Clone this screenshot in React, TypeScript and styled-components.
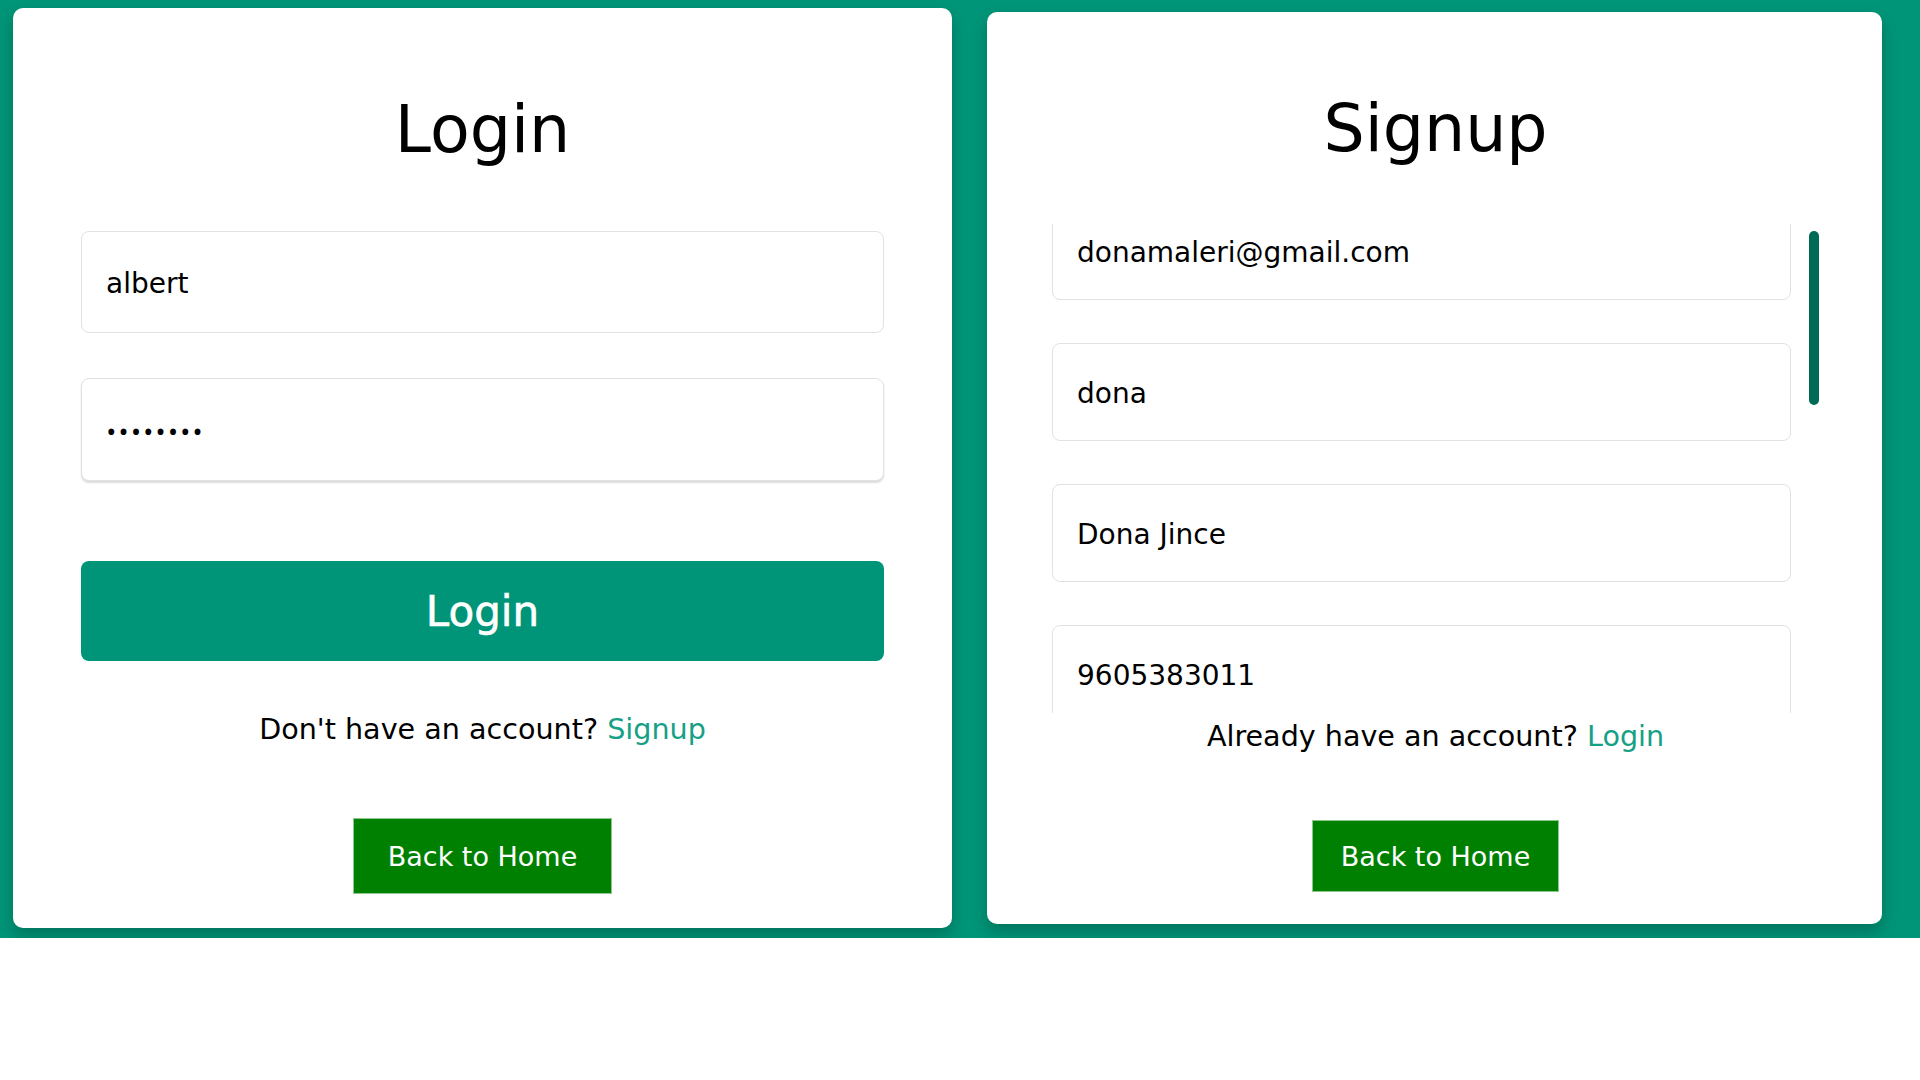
import React, { useLayoutEffect, useRef } from "react";
import styled, { createGlobalStyle } from "styled-components";

const GlobalStyle = createGlobalStyle`
  html, body {
    margin: 0;
    padding: 0;
    background: #ffffff;
  }
  body {
    font-family: "DejaVu Sans", "Open Sans", sans-serif;
    color: #000;
  }
  * { box-sizing: border-box; }
`;

const Page = styled.div`
  display: flex;
  align-items: center;
  gap: 35px;
  padding: 8px 0 10px 13px;
  background: #009578;
  width: 100%;
`;

const Card = styled.section<{ $width: number; $pad: string }>`
  width: ${(p) => p.$width}px;
  flex: none;
  display: flex;
  flex-direction: column;
  align-items: center;
  background: #ffffff;
  border-radius: 10px;
  padding: ${(p) => p.$pad};
  box-shadow: 0 8px 16px rgba(0, 0, 0, 0.22);
`;

const Title = styled.h1<{ $top: number }>`
  margin: ${(p) => p.$top}px 0 0;
  font-size: 65px;
  line-height: 80px;
  font-weight: 400;
  color: #000;
`;

const Field = styled.input<{ $h: number; $raised?: boolean; $mask?: boolean }>`
  display: block;
  width: 100%;
  height: ${(p) => p.$h}px;
  flex: none;
  margin: 0;
  padding: 2px 24px 0;
  border: 1px solid #e2e2e2;
  border-radius: 8px;
  background: #fff;
  font-family: ${(p) => (p.$mask ? `"Open Sans", sans-serif` : "inherit")};
  font-size: 28px;
  letter-spacing: ${(p) => (p.$mask ? "1.8px" : "0")};
  color: #000;
  outline: none;
  box-shadow: ${(p) => (p.$raised ? "0 2px 2px rgba(0,0,0,0.14)" : "none")};
`;

const LoginForm = styled.div`
  width: 100%;
  margin-top: 61px;
  display: flex;
  flex-direction: column;
  gap: 45px;
`;

const PrimaryButton = styled.button<{ $top: number }>`
  width: 100%;
  height: 100px;
  flex: none;
  margin-top: ${(p) => p.$top}px;
  border: none;
  border-radius: 8px;
  background: #009578;
  color: #fff;
  font-family: inherit;
  font-size: 42px;
  font-weight: 400;
  -webkit-text-stroke: 0.6px #fff;
  cursor: pointer;
`;

const Prompt = styled.p<{ $top: number }>`
  margin: ${(p) => p.$top}px 0 0;
  font-size: 28.6px;
  line-height: 40px;
  color: #000;
  text-align: center;
`;

const Link = styled.a`
  color: #16a085;
  text-decoration: none;
  cursor: pointer;
`;

const HomeButton = styled.button<{ $top: number; $w: number; $h: number }>`
  margin-top: ${(p) => p.$top}px;
  width: ${(p) => p.$w}px;
  height: ${(p) => p.$h}px;
  padding: 0;
  background: #008000;
  border: 1px solid #8cc78c;
  color: #fff;
  font-family: inherit;
  font-size: 27px;
  font-weight: 400;
  cursor: pointer;
`;

const ScrollFrame = styled.div`
  align-self: stretch;
  display: flex;
  height: 489px;
  margin-top: 55px;
`;

const ScrollArea = styled.div`
  flex: 1;
  min-width: 0;
  padding-right: 18px;
  overflow-y: scroll;
  display: flex;
  flex-direction: column;
  gap: 43px;
  scrollbar-width: none;

  &::-webkit-scrollbar {
    display: none;
  }
`;

const ScrollTrack = styled.div`
  width: 10px;
  flex: none;
  padding-top: 7px;
`;

const ScrollThumb = styled.div`
  width: 10px;
  height: 174px;
  border-radius: 5px;
  background: #006b55;
`;

const signupFields = [
  { type: "email", value: "donamaleri@gmail.com", placeholder: "Email" },
  { type: "text", value: "dona", placeholder: "Username" },
  { type: "text", value: "Dona Jince", placeholder: "Full Name" },
  { type: "tel", value: "9605383011", placeholder: "Phone Number" },
  { type: "text", value: "", placeholder: "Address" },
  { type: "text", value: "", placeholder: "City" },
  { type: "text", value: "", placeholder: "State" },
  { type: "text", value: "", placeholder: "Pincode" },
  { type: "password", value: "", placeholder: "Password" },
  { type: "password", value: "", placeholder: "Confirm Password" },
];

export default function App() {
  const scrollRef = useRef<HTMLDivElement>(null);

  useLayoutEffect(() => {
    if (scrollRef.current) scrollRef.current.scrollTop = 22;
  }, []);

  return (
    <>
      <GlobalStyle />
      <Page>
        <Card $width={939} $pad="0 68px 34px">
          <Title $top={82}>Login</Title>
          <LoginForm>
            <Field $h={102} type="text" value="albert" readOnly placeholder="Username" />
            <Field
              $h={103}
              $raised
              $mask
              type="password"
              value="albert12"
              readOnly
              placeholder="Password"
            />
          </LoginForm>
          <PrimaryButton $top={80}>Login</PrimaryButton>
          <Prompt $top={48}>
            Don't have an account? <Link>Signup</Link>
          </Prompt>
          <HomeButton $top={69} $w={259} $h={76}>
            Back to Home
          </HomeButton>
        </Card>

        <Card $width={895} $pad="0 63px 32px 65px">
          <Title $top={77}>Signup</Title>
          <ScrollFrame>
            <ScrollArea ref={scrollRef}>
              {signupFields.map((f) => (
                <Field
                  key={f.placeholder}
                  $h={98}
                  $mask={f.type === "password"}
                  type={f.type}
                  value={f.value}
                  placeholder={f.placeholder}
                  readOnly
                />
              ))}
            </ScrollArea>
            <ScrollTrack>
              <ScrollThumb />
            </ScrollTrack>
          </ScrollFrame>
          <Prompt $top={3}>
            Already have an account? <Link>Login</Link>
          </Prompt>
          <HomeButton $top={64} $w={247} $h={72}>
            Back to Home
          </HomeButton>
        </Card>
      </Page>
    </>
  );
}
